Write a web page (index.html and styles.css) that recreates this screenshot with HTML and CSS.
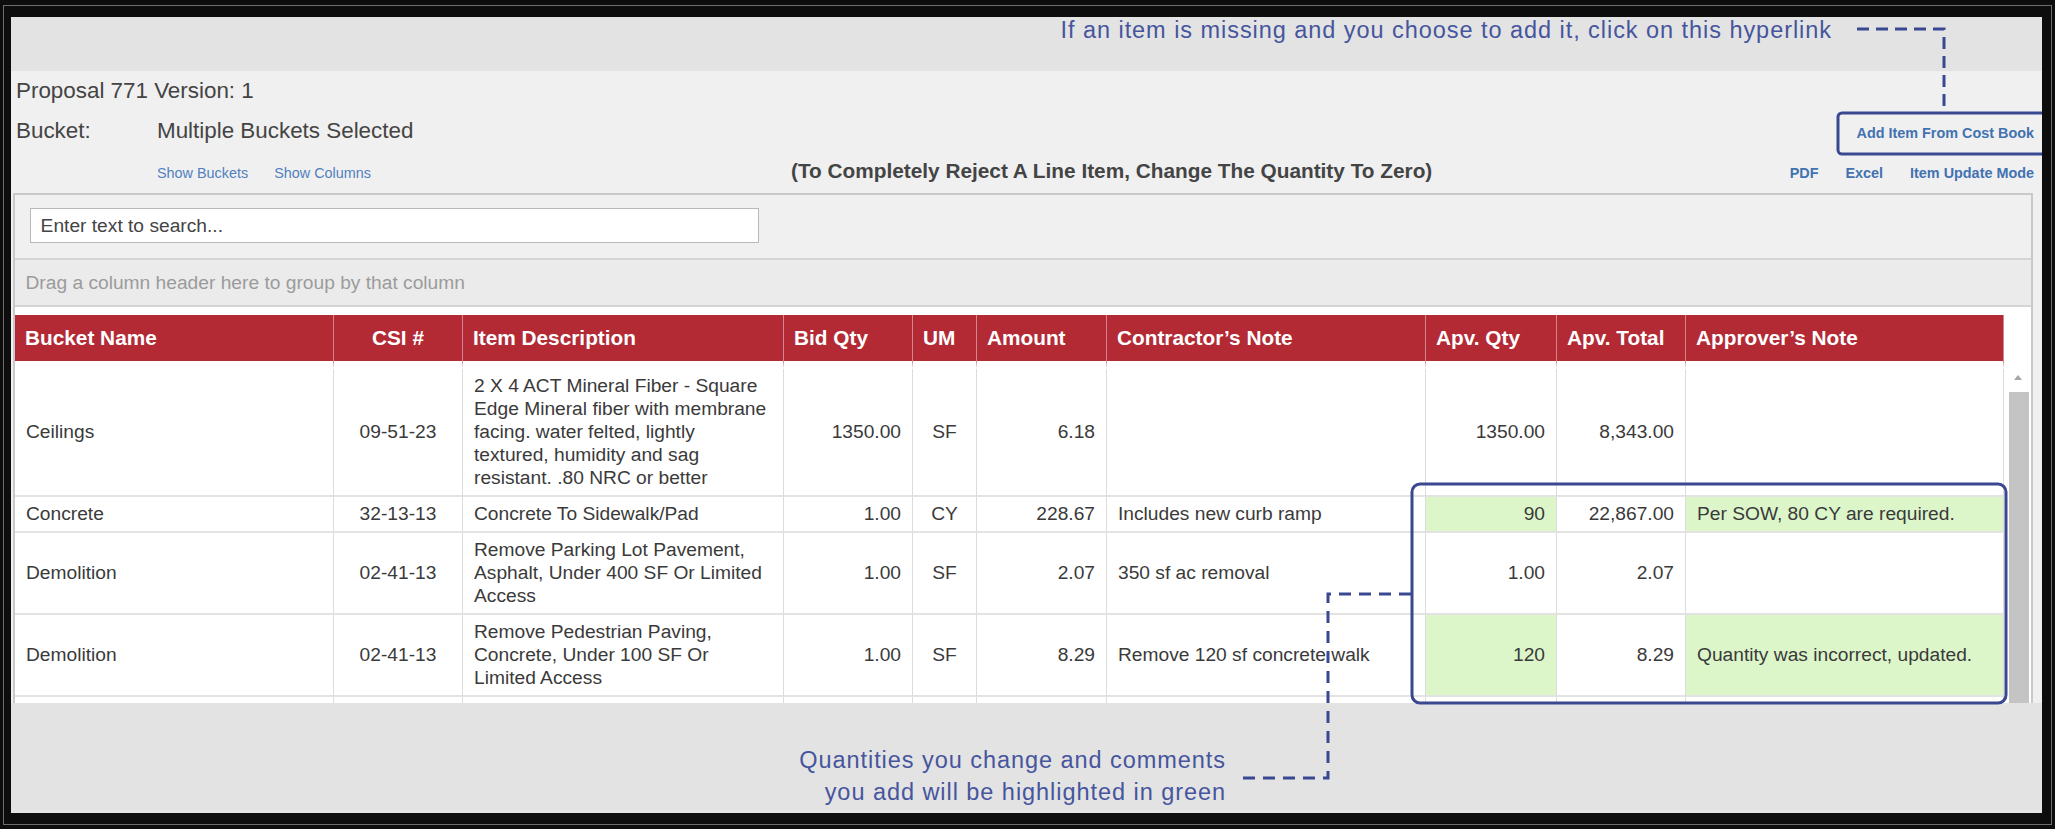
FILE: index.html
```html
<!DOCTYPE html>
<html lang="en">
<head>
    <meta charset="UTF-8">
    <title>Proposal 771 - Line Items</title>
    <link rel="stylesheet" href="styles.css">
</head>
<body>

<div class="screen">
    <div class="page">

        <div class="topband">
            <p class="note note-top">If an item is missing and you choose to add it, click on this hyperlink</p>
        </div>

        <div class="proposal">
            <div class="line">
                <span>Proposal 771 Version: 1</span>
            </div>
            <div class="line">
                <span class="label">Bucket:</span>
                <span>Multiple Buckets Selected</span>
                <a class="link bold push" href="#">Add Item From Cost Book</a>
            </div>
            <div class="line">
                <div class="links">
                    <a class="link" href="#">Show Buckets</a>
                    <a class="link" href="#">Show Columns</a>
                </div>
                <span class="reject">(To Completely Reject A Line Item, Change The Quantity To Zero)</span>
                <div class="links actions">
                    <a class="link bold" href="#">PDF</a>
                    <a class="link bold" href="#">Excel</a>
                    <a class="link bold" href="#">Item Update Mode</a>
                </div>
            </div>
        </div>

        <div class="grid-wrap">
            <div class="grid">
                <div class="search-panel">
                    <input class="search" type="text" placeholder="Enter text to search...">
                </div>
                <div class="group-panel">Drag a column header here to group by that column</div>

                <div class="grid-body">
                    <table class="items">
                        <colgroup>
                            <col class="w-bucket">
                            <col class="w-csi">
                            <col class="w-desc">
                            <col class="w-qty">
                            <col class="w-um">
                            <col class="w-amount">
                            <col class="w-note">
                            <col class="w-apvqty">
                            <col class="w-apvtotal">
                            <col class="w-apvnote">
                        </colgroup>
                        <thead>
                            <tr>
                                <th>Bucket Name</th>
                                <th class="c">CSI #</th>
                                <th>Item Description</th>
                                <th>Bid Qty</th>
                                <th>UM</th>
                                <th>Amount</th>
                                <th>Contractor’s Note</th>
                                <th>Apv. Qty</th>
                                <th>Apv. Total</th>
                                <th>Approver’s Note</th>
                            </tr>
                        </thead>
                        <tbody>
                            <tr>
                                <td>Ceilings</td>
                                <td class="c">09-51-23</td>
                                <td>2 X 4 ACT Mineral Fiber - Square Edge Mineral fiber with membrane facing. water felted, lightly textured, humidity and sag resistant. .80 NRC or better</td>
                                <td class="r">1350.00</td>
                                <td class="c">SF</td>
                                <td class="r">6.18</td>
                                <td></td>
                                <td class="r">1350.00</td>
                                <td class="r">8,343.00</td>
                                <td></td>
                            </tr>
                            <tr>
                                <td>Concrete</td>
                                <td class="c">32-13-13</td>
                                <td>Concrete To Sidewalk/Pad</td>
                                <td class="r">1.00</td>
                                <td class="c">CY</td>
                                <td class="r">228.67</td>
                                <td>Includes new curb ramp</td>
                                <td class="r changed">90</td>
                                <td class="r">22,867.00</td>
                                <td class="changed">Per SOW, 80 CY are required.</td>
                            </tr>
                            <tr>
                                <td>Demolition</td>
                                <td class="c">02-41-13</td>
                                <td>Remove Parking Lot Pavement, Asphalt, Under 400 SF Or Limited Access</td>
                                <td class="r">1.00</td>
                                <td class="c">SF</td>
                                <td class="r">2.07</td>
                                <td>350 sf ac removal</td>
                                <td class="r">1.00</td>
                                <td class="r">2.07</td>
                                <td></td>
                            </tr>
                            <tr>
                                <td>Demolition</td>
                                <td class="c">02-41-13</td>
                                <td>Remove Pedestrian Paving, Concrete, Under 100 SF Or Limited Access</td>
                                <td class="r">1.00</td>
                                <td class="c">SF</td>
                                <td class="r">8.29</td>
                                <td>Remove 120 sf concrete walk</td>
                                <td class="r changed">120</td>
                                <td class="r">8.29</td>
                                <td class="changed">Quantity was incorrect, updated.</td>
                            </tr>
                            <tr>
                                <td>&nbsp;</td><td></td><td></td><td></td><td></td>
                                <td></td><td></td><td></td><td></td><td></td>
                            </tr>
                        </tbody>
                    </table>
                    <div class="scroll">
                        <div class="scroll-arrow"></div>
                        <div class="scroll-thumb"></div>
                    </div>
                </div>
            </div>
        </div>

        <p class="note note-bottom">Quantities you change and comments<br>you add will be highlighted in green</p>

        <!-- callouts drawn over the screenshot -->
        <svg class="callouts" width="2031" height="796" viewBox="0 0 2031 796">
            <g fill="none" stroke="#3a4891" stroke-width="3">
                <path d="M1846 12 H1933 V96" stroke-dasharray="12 7"/>
                <rect x="1827" y="96" width="215" height="41" rx="4"/>
                <rect x="1401" y="467" width="594" height="219" rx="8"/>
                <path d="M1400 577 H1317 V761 H1231" stroke-dasharray="12 8"/>
            </g>
        </svg>

    </div>
</div>

</body>
</html>
```

FILE: styles.css
```css
body {
    margin: 0;
    background-color: #0d0d0d;
    font-family: "Liberation Sans", Arial, sans-serif;
    color: #3b3b3b;
}
.screen {
    margin: 5px 3px 4px 3px;
    border: 1px solid #6e6e6e;
    padding: 11px 9px 11px 7px;
}
.page {
    position: relative;
    width: 2031px;
    height: 796px;
    background-color: #e3e3e3;
    overflow: hidden;
}

/* annotation text */
.note {
    margin: 0;
    color: #46559d;
    font-size: 23.5px;
    letter-spacing: 0.95px;
    text-align: right;
}
.note-top {
    line-height: 27px;
    padding-right: 210px;
}
.note-bottom {
    line-height: 31.5px;
    padding: 42px 816px 0 0;
}
.topband {
    height: 54px;
}

/* proposal header */
.proposal {
    background-color: #f0f0f0;
    padding: 0 8px 2px 5px;
}
.line {
    display: flex;
    align-items: baseline;
    height: 40px;
    line-height: 40px;
    font-size: 22.4px;
    color: #444;
    white-space: nowrap;
}
.label {
    width: 141px;
}
.link {
    color: #5080bf;
    font-size: 14.4px;
    line-height: 30px;
    text-decoration: none;
}
.link.bold {
    font-weight: bold;
    color: #4272b0;
}
.push {
    margin-left: auto;
}
.links {
    display: flex;
    align-items: baseline;
    gap: 26px;
    margin-left: 141px;
    line-height: 30px;
}
.links.actions {
    gap: 27px;
    margin-left: auto;
}
.reject {
    margin-left: 420px;
    font-size: 20.8px;
    font-weight: bold;
    color: #444;
}

/* grid */
.grid-wrap {
    background-color: #f0f0f0;
    padding: 0 9px 0 2px;
}
.grid {
    height: 508px;
    border: 2px solid #c9c9c9;
    border-bottom: none;
    background-color: #fff;
    overflow: hidden;
}
.search-panel {
    height: 50px;
    padding: 13px 0 0 14.6px;
    background-color: #f0f0f0;
}
.search {
    box-sizing: border-box;
    width: 729px;
    height: 35px;
    margin: 0;
    padding: 0 10px;
    border: 1px solid #b9b9b9;
    background-color: #fff;
    font-family: "Liberation Sans", Arial, sans-serif;
    font-size: 19.2px;
    color: #444;
}
.search::placeholder {
    color: #444;
}
.group-panel {
    height: 45px;
    line-height: 45px;
    padding-left: 10.5px;
    border-top: 2px solid #d4d4d4;
    border-bottom: 2px solid #d4d4d4;
    background-color: #ebebeb;
    color: #9b9b9b;
    font-size: 19.2px;
}
.grid-body {
    display: flex;
    align-items: flex-start;
    padding-top: 8px;
    background-color: #fff;
}

.items {
    flex: none;
    width: 1989px;
    table-layout: fixed;
    border-collapse: separate;
    border-spacing: 0;
    font-size: 19.2px;
    line-height: 23px;
}
.w-bucket { width: 319px; }
.w-csi { width: 129px; }
.w-desc { width: 321px; }
.w-qty { width: 129px; }
.w-um { width: 64px; }
.w-amount { width: 130px; }
.w-note { width: 319px; }
.w-apvqty { width: 131px; }
.w-apvtotal { width: 129px; }
.w-apvnote { width: 318px; }

.items th {
    padding: 0 10px;
    line-height: 46px;
    background-color: #b32a35;
    color: #fff;
    font-size: 20.8px;
    font-weight: bold;
    text-align: left;
    white-space: nowrap;
    border-right: 1px solid #cf858b;
    border-bottom: 8px solid #fff;
}
.items td {
    padding: 5px 11px 6px;
    vertical-align: middle;
    color: #3a3a3a;
    border-right: 1px solid #dcdcdc;
    border-bottom: 2px solid #e3e3e3;
}
.items .r { text-align: right; }
.items .c { text-align: center; }
.items td.changed {
    background-color: #dcf6ca;
}

.scroll {
    flex: 1;
    align-self: stretch;
    background-color: #fff;
    padding-top: 60px;
}
.scroll-arrow {
    width: 0;
    height: 0;
    margin: 0 auto;
    border-left: 4px solid transparent;
    border-right: 4px solid transparent;
    border-bottom: 5px solid #a6a6a6;
}
.scroll-thumb {
    width: 20px;
    height: 400px;
    margin: 12px 0 0 5px;
    background-color: #c4c4c4;
}

.callouts {
    position: absolute;
    left: 0;
    top: 0;
    pointer-events: none;
}
```
